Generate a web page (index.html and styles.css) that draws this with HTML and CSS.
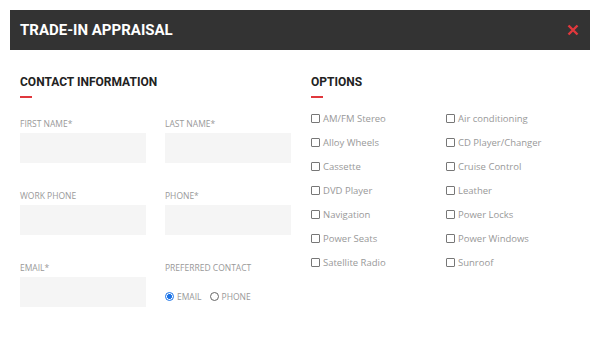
FILE: index.html
```html
<!DOCTYPE html>
<html lang="en">

<head>
    <meta charset="UTF-8">
    <title>Trade-in Appraisal</title>
    <meta name="viewport" content="width=device-width, initial-scale=1.0">
    <link rel="stylesheet" href="styles.css">
</head>

<body>
    <div class="modal">
        <header class="modal-head">
            <h1>TRADE-IN APPRAISAL</h1>
            <span class="close">
                <svg width="12" height="12" viewBox="0 0 12 12">
                    <path d="M1.5 1.5 L10.5 10.5 M10.5 1.5 L1.5 10.5" stroke="#e0383d" stroke-width="2.4" />
                </svg>
            </span>
        </header>

        <div class="modal-body">
            <!-- Coordonnées -->
            <section class="contact">
                <h2>CONTACT INFORMATION</h2>
                <div class="fields">
                    <div class="field">
                        <label>FIRST NAME*</label>
                        <div class="input"></div>
                    </div>
                    <div class="field">
                        <label>LAST NAME*</label>
                        <div class="input"></div>
                    </div>
                    <div class="field">
                        <label>WORK PHONE</label>
                        <div class="input"></div>
                    </div>
                    <div class="field">
                        <label>PHONE*</label>
                        <div class="input"></div>
                    </div>
                    <div class="field">
                        <label>EMAIL*</label>
                        <div class="input"></div>
                    </div>
                    <div class="field">
                        <label>PREFERRED CONTACT</label>
                        <div class="radios">
                            <span class="radio checked"></span><span class="radio-text">EMAIL</span>
                            <span class="radio"></span><span class="radio-text">PHONE</span>
                        </div>
                    </div>
                </div>
            </section>

            <!-- Options -->
            <section class="options">
                <h2>OPTIONS</h2>
                <ul class="checks">
                    <li><span class="box"></span>AM/FM Stereo</li>
                    <li><span class="box"></span>Air conditioning</li>
                    <li><span class="box"></span>Alloy Wheels</li>
                    <li><span class="box"></span>CD Player/Changer</li>
                    <li><span class="box"></span>Cassette</li>
                    <li><span class="box"></span>Cruise Control</li>
                    <li><span class="box"></span>DVD Player</li>
                    <li><span class="box"></span>Leather</li>
                    <li><span class="box"></span>Navigation</li>
                    <li><span class="box"></span>Power Locks</li>
                    <li><span class="box"></span>Power Seats</li>
                    <li><span class="box"></span>Power Windows</li>
                    <li><span class="box"></span>Satellite Radio</li>
                    <li><span class="box"></span>Sunroof</li>
                </ul>
            </section>
        </div>
    </div>
</body>

</html>
```

FILE: styles.css
```css
/* Reset */

* {
    padding: 0;
    margin: 0;
    box-sizing: border-box;
}

body {
    background-color: #fff;
    font-family: "Open Sans", Arial, sans-serif;
    padding: 10px;
}

/* Fenêtre */

.modal-head {
    height: 40px;
    background-color: #333;
    display: flex;
    align-items: center;
    justify-content: space-between;
    padding: 0 11px 0 10px;
}

.modal-head h1 {
    font-family: Roboto, Arial, sans-serif;
    font-size: 15px;
    font-weight: 700;
    color: #fff;
}

.close {
    display: flex;
}

.modal-body {
    display: flex;
    gap: 20px;
    padding: 25px 10px 0;
}

.modal-body section {
    flex: 0 0 270px;
}

h2 {
    font-family: Roboto, Arial, sans-serif;
    font-size: 12px;
    font-weight: 700;
    line-height: 15px;
    color: #222;
}

h2::after {
    content: "";
    display: block;
    width: 12px;
    height: 2px;
    margin-top: 6px;
    background-color: #e0383d;
}

/* Champs */

.fields {
    display: grid;
    grid-template-columns: 126px 126px;
    column-gap: 19px;
    row-gap: 27px;
    margin-top: 20px;
}

label {
    display: block;
    font-size: 8.5px;
    line-height: 12px;
    color: #999;
    margin-bottom: 3px;
}

.input {
    height: 30px;
    background-color: #f5f5f5;
}

.radios {
    display: flex;
    align-items: center;
    margin-top: 17px;
    font-size: 8.5px;
    color: #999;
}

.radio {
    width: 9px;
    height: 9px;
    border: 1.5px solid #666;
    border-radius: 50%;
    margin-right: 3px;
}

.radio.checked {
    border-color: #1a73e8;
    background: radial-gradient(circle, #1a73e8 0 2.2px, #fff 2.6px);
}

.radio-text {
    margin-right: 8px;
}

/* Options */

.checks {
    list-style: none;
    display: grid;
    grid-template-columns: 135px 135px;
    margin-top: 8px;
}

.checks li {
    height: 24px;
    display: flex;
    align-items: center;
    font-size: 9.5px;
    color: #999;
}

.box {
    width: 9px;
    height: 9px;
    border: 1px solid #777;
    border-radius: 1px;
    margin-right: 3px;
}
```
